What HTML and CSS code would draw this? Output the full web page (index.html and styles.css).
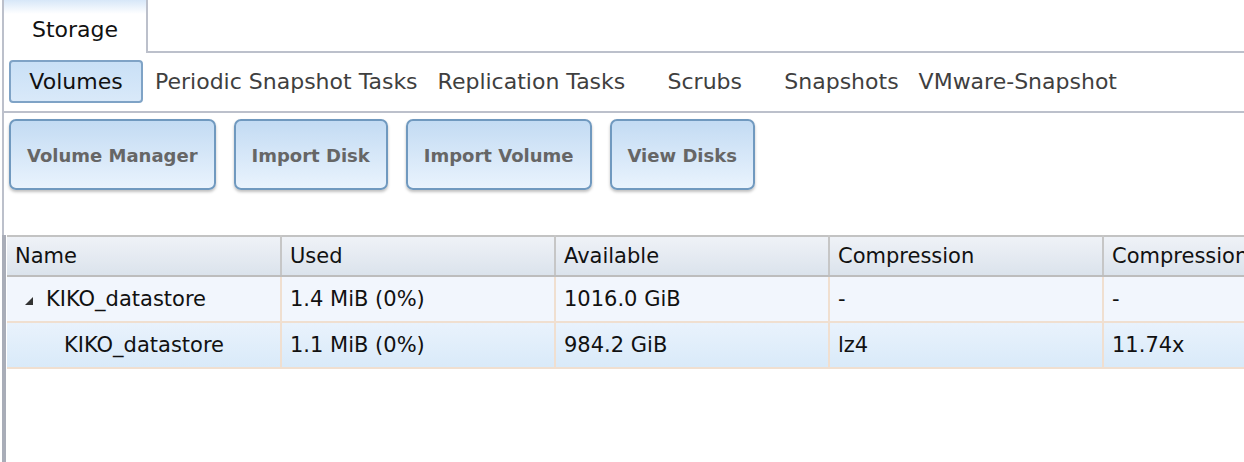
FILE: index.html
```html
<!DOCTYPE html>
<html lang="en">
<head>
  <meta charset="UTF-8" />
  <title>Storage</title>
  <link rel="stylesheet" href="styles.css">
</head>
<body>
  <div class="page">
    <div class="tabs">
      <div class="tab active">Storage</div>
      <div class="tab-fill"></div>
    </div>

    <div class="subtabs">
      <div class="subtab selected">Volumes</div>
      <div class="subtab">Periodic Snapshot Tasks</div>
      <div class="subtab">Replication Tasks</div>
      <div class="subtab wide">Scrubs</div>
      <div class="subtab">Snapshots</div>
      <div class="subtab">VMware-Snapshot</div>
    </div>

    <div class="actions">
      <button class="action">Volume Manager</button>
      <button class="action">Import Disk</button>
      <button class="action">Import Volume</button>
      <button class="action">View Disks</button>
    </div>

    <div class="grid">
      <table>
        <colgroup>
          <col style="width:274px">
          <col style="width:274px">
          <col style="width:274px">
          <col style="width:274px">
          <col style="width:274px">
        </colgroup>
        <thead>
          <tr>
            <th>Name</th>
            <th>Used</th>
            <th>Available</th>
            <th>Compression</th>
            <th>Compression Ratio</th>
          </tr>
        </thead>
        <tbody>
          <tr class="row">
            <td><span class="expander"></span>KIKO_datastore</td>
            <td>1.4 MiB (0%)</td>
            <td>1016.0 GiB</td>
            <td>-</td>
            <td>-</td>
          </tr>
          <tr class="row selected">
            <td class="child">KIKO_datastore</td>
            <td>1.1 MiB (0%)</td>
            <td>984.2 GiB</td>
            <td>lz4</td>
            <td>11.74x</td>
          </tr>
        </tbody>
      </table>
    </div>
  </div>
</body>
</html>
```

FILE: styles.css
```css
body {
  margin: 0;
  padding: 0;
  font-family: "DejaVu Sans", Verdana, sans-serif;
  background: #fff;
  overflow: hidden;
}

.page {
  margin-left: 2px;
  border-left: 2px solid #bcc0cb;
  height: 100vh;
}

/* top tabs */
.tabs {
  display: flex;
  height: 53px;
}

.tab {
  width: 144px;
  border-right: 2px solid #bcc0cb;
  background: linear-gradient(#d7e7f8 0, #ffffff 14px);
  font-size: 22px;
  color: #111;
  text-align: center;
  padding-top: 17px;
  box-sizing: border-box;
}

.tab-fill {
  flex: 1;
  border-bottom: 2px solid #bcc0cb;
}

/* sub tabs */
.subtabs {
  display: flex;
  align-items: center;
  box-sizing: border-box;
  height: 60px;
  padding: 0 0 2px 5px;
  border-bottom: 2px solid #bcc0cb;
  font-size: 22px;
  color: #3f3f3f;
}

.subtab {
  padding: 0 10px;
  white-space: nowrap;
}

.subtab.wide {
  min-width: 119px;
  text-align: center;
}

.subtab.selected {
  width: 134px;
  height: 43px;
  line-height: 40px;
  padding: 0;
  margin-right: 2px;
  text-align: center;
  box-sizing: border-box;
  color: #111;
  border: 2px solid #7fa3c6;
  border-radius: 4px;
  background: linear-gradient(#c9e0f6, #d9e9f9);
}

/* action buttons */
.actions {
  display: flex;
  gap: 18px;
  padding: 6px 5px 0;
  height: 122px;
  box-sizing: border-box;
}

.action {
  height: 71px;
  padding: 2px 16px 0;
  font-family: "DejaVu Sans", Verdana, sans-serif;
  font-size: 18px;
  font-weight: bold;
  color: #666;
  border: 2px solid #7099bf;
  border-radius: 7px;
  background: linear-gradient(#c3dbf3, #e9f3fd);
  box-shadow: 0 2px 3px rgba(0, 0, 0, 0.25);
  cursor: pointer;
}

/* volume grid */
.grid {
  margin-left: -2px;
  border-left: 4px solid #a9adb8;
  padding-left: 1px;
  height: 100%;
}

table {
  border-collapse: collapse;
  table-layout: fixed;
  width: 1370px;
  font-size: 21px;
  color: #111;
}

th {
  height: 38px;
  text-align: left;
  font-weight: normal;
  padding: 0 8px;
  white-space: nowrap;
  overflow: hidden;
  border-top: 2px solid #c3c3c3;
  border-bottom: 2px solid #bdbdbd;
  border-right: 2px solid #c6c6c6;
  background: linear-gradient(#eff2f7, #dbe3ec);
}

td {
  height: 44px;
  padding: 0 8px;
  white-space: nowrap;
  border-right: 2px solid #f0dfd0;
  border-bottom: 2px solid #f0dfd0;
}

.row td {
  background: #f2f6fd;
}

.row.selected td {
  background: linear-gradient(#e9f2fc, #d9eaf9);
}

.expander {
  display: inline-block;
  width: 0;
  height: 0;
  border-left: 8px solid transparent;
  border-bottom: 8px solid #333;
  margin: 0 13px 0 10px;
  vertical-align: 1px;
}

td.child {
  padding-left: 57px;
}
```
